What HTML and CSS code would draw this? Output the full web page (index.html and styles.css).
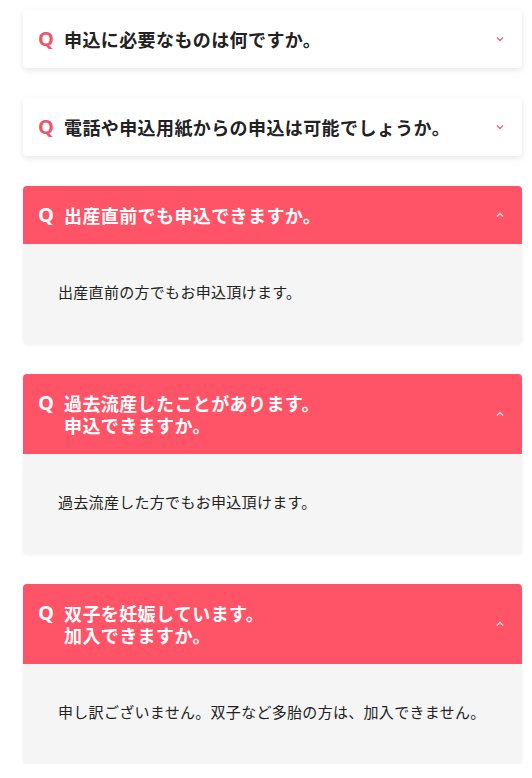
FILE: index.html
```html
<!doctype html>
<html>
  <head>
    <meta charset="utf-8">
    <title>よくあるご質問</title>
    <meta name="viewport" content="width=device-width">
    <link rel="stylesheet" href="styles.css">
  </head>
  <body>
    <div class="faq">
      <div class="item">
        <div class="question">
          <span class="q">Q</span>
          <div class="title"><span>申込に必要なものは何ですか。</span></div>
          <svg class="arrow" width="8" height="6" viewBox="0 0 8 6"><path d="M1 1.5L4 4.5L7 1.5" fill="none" stroke="currentColor" stroke-width="1.4"/></svg>
        </div>
      </div>

      <div class="item">
        <div class="question">
          <span class="q">Q</span>
          <div class="title"><span>電話や申込用紙からの申込は可能でしょうか。</span></div>
          <svg class="arrow" width="8" height="6" viewBox="0 0 8 6"><path d="M1 1.5L4 4.5L7 1.5" fill="none" stroke="currentColor" stroke-width="1.4"/></svg>
        </div>
      </div>

      <div class="item open">
        <div class="question">
          <span class="q">Q</span>
          <div class="title"><span>出産直前でも申込できますか。</span></div>
          <svg class="arrow" width="8" height="6" viewBox="0 0 8 6"><path d="M1 4.5L4 1.5L7 4.5" fill="none" stroke="currentColor" stroke-width="1.4"/></svg>
        </div>
        <div class="answer">出産直前の方でもお申込頂けます。</div>
      </div>

      <div class="item open">
        <div class="question">
          <span class="q">Q</span>
          <div class="title"><span>過去流産したことがあります。</span><span>申込できますか。</span></div>
          <svg class="arrow" width="8" height="6" viewBox="0 0 8 6"><path d="M1 4.5L4 1.5L7 4.5" fill="none" stroke="currentColor" stroke-width="1.4"/></svg>
        </div>
        <div class="answer">過去流産した方でもお申込頂けます。</div>
      </div>

      <div class="item open">
        <div class="question">
          <span class="q">Q</span>
          <div class="title"><span>双子を妊娠しています。</span><span>加入できますか。</span></div>
          <svg class="arrow" width="8" height="6" viewBox="0 0 8 6"><path d="M1 4.5L4 1.5L7 4.5" fill="none" stroke="currentColor" stroke-width="1.4"/></svg>
        </div>
        <div class="answer">申し訳ございません。双子など多胎の方は、加入できません。</div>
      </div>
    </div>
  </body>
</html>
```

FILE: styles.css
```css
body {
	margin: 0;
	background: #fff;
	font-family: "Noto Sans CJK JP", "Noto Sans", sans-serif;
	color: #222;
}
.faq {
	display: flex;
	flex-direction: column;
	gap: 30px;
	padding: 10px 10px 0 23px;
}
.item {
	background: #fff;
	border-radius: 4px;
	box-shadow: 0 2px 6px rgba(0, 0, 0, 0.1);
	overflow: hidden;
}
.item .question {
	display: flex;
	align-items: center;
	padding: 18px 18px 18px 15px;
	font-size: 18px;
	font-weight: bold;
	line-height: 22px;
	letter-spacing: 0.4px;
	color: #222;
}
.item .q {
	align-self: flex-start;
	width: 13px;
	margin-right: 13px;
	font-family: "Open Sans", "Liberation Sans", sans-serif;
	font-size: 20px;
	font-weight: bold;
	letter-spacing: 0;
	color: #ea566c;
}
.item .title {
	flex: 1;
	display: flex;
	flex-direction: column;
}
.item .title span {
	display: block;
	height: 22px;
}
.item .arrow {
	color: #e36680;
	margin-left: 10px;
}
.item.open {
	box-shadow: 0 1px 3px rgba(0, 0, 0, 0.06);
}
.item.open .question {
	background: #ff5468;
	color: #fff;
}
.item.open .q {
	color: #fff;
}
.item.open .arrow {
	color: #fcdde2;
}
.item .answer {
	background: #f5f5f5;
	padding: 37px 20px 41px 35px;
	font-size: 15px;
	line-height: 22px;
	letter-spacing: 0.3px;
	color: #222;
}
```
